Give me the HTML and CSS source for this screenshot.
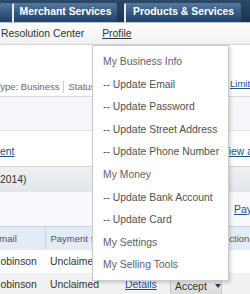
FILE: index.html
```html
<!DOCTYPE html>
<html lang="en">
<head>
    <meta charset="UTF-8">
    <title>Profile</title>
    <link rel="stylesheet" href="styles.css">
</head>
<body>
<div class="topbar">
    <div class="tab tab-edge"></div>
    <div class="tab tab-merchant">Merchant Services</div>
    <div class="tab tab-products">Products &amp; Services</div>
</div>

<div class="subnav">
    <a href="#">Resolution Center</a>
    <a href="#" class="active">Profile</a>
</div>

<!-- account summary -->
<div class="summary row">
    <div class="info">
        <span class="type">Type: Business</span><span class="sep"></span><span>Status</span>
    </div>
    <a href="#" class="limits">Limits</a>
</div>
<div class="band"></div>

<div class="links row">
    <a href="#">ent</a>
    <a href="#">View all</a>
</div>

<div class="year">2014)</div>

<div class="pay row">
    <span></span>
    <a href="#" class="pay-link">Pay</a>
</div>

<table class="grid">
    <thead>
    <tr>
        <th class="c-name">Email</th>
        <th class="c-status">Payment status</th>
        <th class="c-details"></th>
        <th class="c-order"></th>
        <th class="c-actions">Actions</th>
    </tr>
    </thead>
    <tbody>
    <tr>
        <td>Robinson</td>
        <td class="c-status">Unclaimed</td>
        <td></td>
        <td></td>
        <td></td>
    </tr>
    <tr class="alt">
        <td>Robinson</td>
        <td class="c-status">Unclaimed</td>
        <td class="c-details"><a href="#">Details</a></td>
        <td class="c-order"><span class="btn">Accept<i class="caret"></i></span></td>
        <td></td>
    </tr>
    </tbody>
</table>

<!-- profile dropdown -->
<ul class="menu">
    <li class="head">My Business Info</li>
    <li>-- Update Email</li>
    <li>-- Update Password</li>
    <li>-- Update Street Address</li>
    <li>-- Update Phone Number</li>
    <li class="head">My Money</li>
    <li>-- Update Bank Account</li>
    <li>-- Update Card</li>
    <li class="head">My Settings</li>
    <li class="head">My Selling Tools</li>
</ul>
</body>
</html>
```

FILE: styles.css
```css
* {
    margin: 0;
    padding: 0;
    box-sizing: border-box;
}

html, body {
    width: 250px;
    height: 294px;
    overflow: hidden;
}

body {
    position: relative;
    font-family: "Liberation Sans", Arial, sans-serif;
    font-size: 10.4px;
    color: #333;
    background: #fff;
}

a {
    color: #1d4f91;
}

/* top tabs */
.topbar {
    height: 23px;
    padding-top: 3px;
    display: flex;
    align-items: flex-end;
    background: linear-gradient(#2d4968, #1a3352);
    border-bottom: 1px solid #b8c4d2;
}

.tab {
    height: 19px;
    line-height: 18px;
    color: #fff;
    font-weight: bold;
    text-align: center;
    white-space: nowrap;
    background: linear-gradient(#56789e, #33577f 55%, #21416a);
    border-left: 2px solid #e6ecf3;
    border-radius: 2px 2px 0 0;
}

.tab-edge {
    width: 12px;
    border-left: none;
}

.tab-merchant {
    width: 105px;
}

.tab-products {
    width: 117px;
    margin-left: 7px;
}

/* sub navigation */
.subnav {
    height: 22px;
    line-height: 21px;
    padding-left: 1px;
    display: flex;
    gap: 18px;
    background: linear-gradient(#fdfdfd, #f1f1f1);
    border-bottom: 1px solid #d6d6d6;
}

.subnav a {
    color: #333;
    text-decoration: none;
}

.subnav a.active {
    text-decoration: underline;
}

/* content rows */
.row {
    display: grid;
    grid-template-columns: 222px 1fr;
    white-space: nowrap;
}

.summary {
    height: 52px;
    padding-top: 33px;
    line-height: 12px;
    font-size: 9.5px;
    color: #666;
    border-bottom: 1px solid #d9d9d9;
}

.info {
    display: flex;
    align-items: center;
}

.type {
    margin-left: -5px;
}

.sep {
    width: 1px;
    height: 12px;
    margin: 0 4px;
    background: #ccc;
}

.limits {
    padding-left: 8px;
}

.band {
    height: 34px;
    background: #f5f7fa;
    border-bottom: 1px solid #dfe3e8;
}

.links {
    height: 35px;
    padding-top: 5px;
    align-items: center;
}

.year {
    height: 26px;
    line-height: 25px;
    background: linear-gradient(#eef0f3, #e2e6eb);
    border-top: 1px solid #cdd3da;
}

.pay {
    height: 34px;
    align-items: center;
    background: #f7f9fc;
}

.pay-link {
    padding-left: 12px;
}

/* payments table */
.grid {
    margin-left: -7px;
    width: 289px;
    table-layout: fixed;
    border-collapse: collapse;
    white-space: nowrap;
}

.grid th,
.grid td {
    height: 23px;
    overflow: hidden;
}

.grid th {
    font-size: 9.5px;
    font-weight: normal;
    color: #555;
    text-align: left;
    background: #e3ebf5;
    border-top: 1px solid #cbd5e1;
}

.grid tr.alt td {
    background: #f1f1f1;
}

.c-name {
    width: 52px;
}

th.c-name {
    border-right: 1px solid #c7d2df;
}

.c-status {
    width: 77px;
    padding-left: 5px;
}

.c-details {
    width: 45px;
    padding-left: 3px;
}

.c-order {
    width: 55px;
    padding-left: 3px;
}

.c-actions {
    width: 60px;
    padding-left: 1px;
}

.btn {
    display: inline-flex;
    align-items: center;
    gap: 8px;
    width: 52px;
    height: 17px;
    margin-top: 4px;
    padding-left: 4px;
    background: linear-gradient(#ececec, #dadada);
    border: 1px solid #c6c6c6;
    border-radius: 2px;
}

.caret {
    width: 0;
    height: 0;
    border-left: 3px solid transparent;
    border-right: 3px solid transparent;
    border-top: 4px solid #1f3d70;
}

/* dropdown */
.menu {
    position: absolute;
    left: 92px;
    top: 45px;
    width: 137px;
    height: 236px;
    padding: 5px 0 4px;
    list-style: none;
    background: #fff;
    border: 1px solid #c9c9c9;
    box-shadow: 2px 2px 3px rgba(0, 0, 0, 0.15);
}

.menu li {
    line-height: 22.6px;
    padding-left: 10px;
    color: #505050;
    white-space: nowrap;
}

.menu li.head {
    color: #5e5e6a;
}
```
